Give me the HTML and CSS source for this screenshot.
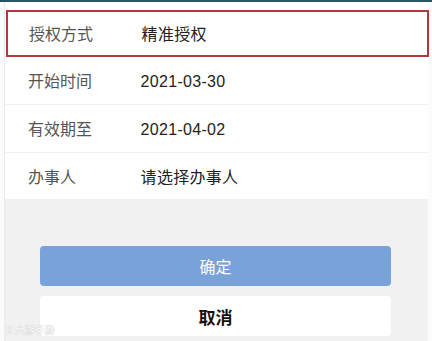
FILE: index.html
```html
<!DOCTYPE html>
<html lang="zh-CN">
<head>
  <meta charset="UTF-8" />
  <title>授权</title>
  <link rel="stylesheet" href="styles.css">
</head>
<body>
  <div class="topbar"></div>
  <div class="panel">
    <div class="list">
      <div class="row row-active">
        <span class="label">授权方式</span>
        <span class="value">精准授权</span>
      </div>
      <div class="row">
        <span class="label">开始时间</span>
        <span class="value">2021-03-30</span>
      </div>
      <div class="row">
        <span class="label">有效期至</span>
        <span class="value">2021-04-02</span>
      </div>
      <div class="row row-last">
        <span class="label">办事人</span>
        <span class="value">请选择办事人</span>
      </div>
    </div>

    <div class="actions">
      <button class="btn btn-ok">确定</button>
      <button class="btn btn-cancel">取消</button>
    </div>
  </div>
  <div class="watermark">K 六游手游</div>
</body>
</html>
```

FILE: styles.css
```css
body {
  margin: 0;
  font-family: "Noto Sans CJK SC", "Noto Sans", sans-serif;
  background-color: #fbfbfb;
  width: 432px;
  height: 341px;
  overflow: hidden;
  position: relative;
}
.topbar {
  height: 2px;
  background: #2b5566;
}
.panel {
  margin: 0 4px 0 4px;
  border-left: 1px solid #ececec;
  background: #f1f1f1;
  height: 339px;
}
.list {
  background: #fff;
  padding-top: 8px;
}
.row {
  height: 48px;
  line-height: 46px;
  font-size: 16px;
  border-bottom: 1px solid #f1f1f1;
  box-sizing: border-box;
  white-space: nowrap;
}
.row-active {
  border: 2px solid #b3383b;
  margin: 0 -1px 0 1px;
  height: 47px;
  line-height: 42px;
}
.row-last {
  border-bottom: none;
  height: 46px;
}
.label {
  display: inline-block;
  width: 109px;
  padding-left: 23px;
  color: #555;
}
.row-active .label {
  padding-left: 21px;
}
.value {
  font-family: "Liberation Sans", "Noto Sans CJK SC", sans-serif;
  letter-spacing: 0.3px;
  color: #222;
}
.actions {
  padding: 47px 37px 0 35px;
}
.btn {
  display: block;
  width: 100%;
  height: 40px;
  border: none;
  border-radius: 4px;
  font-family: inherit;
  font-size: 16px;
}
.btn-ok {
  background-color: #78a2d8;
  color: #fff;
}
.btn-cancel {
  margin-top: 10px;
  background-color: #fff;
  color: #111;
  font-weight: bold;
  font-size: 17px;
}
.watermark {
  position: absolute;
  left: 6px;
  bottom: 4px;
  font-size: 10px;
  color: #fff;
  text-shadow: 0 0 1px #999;
}
```
